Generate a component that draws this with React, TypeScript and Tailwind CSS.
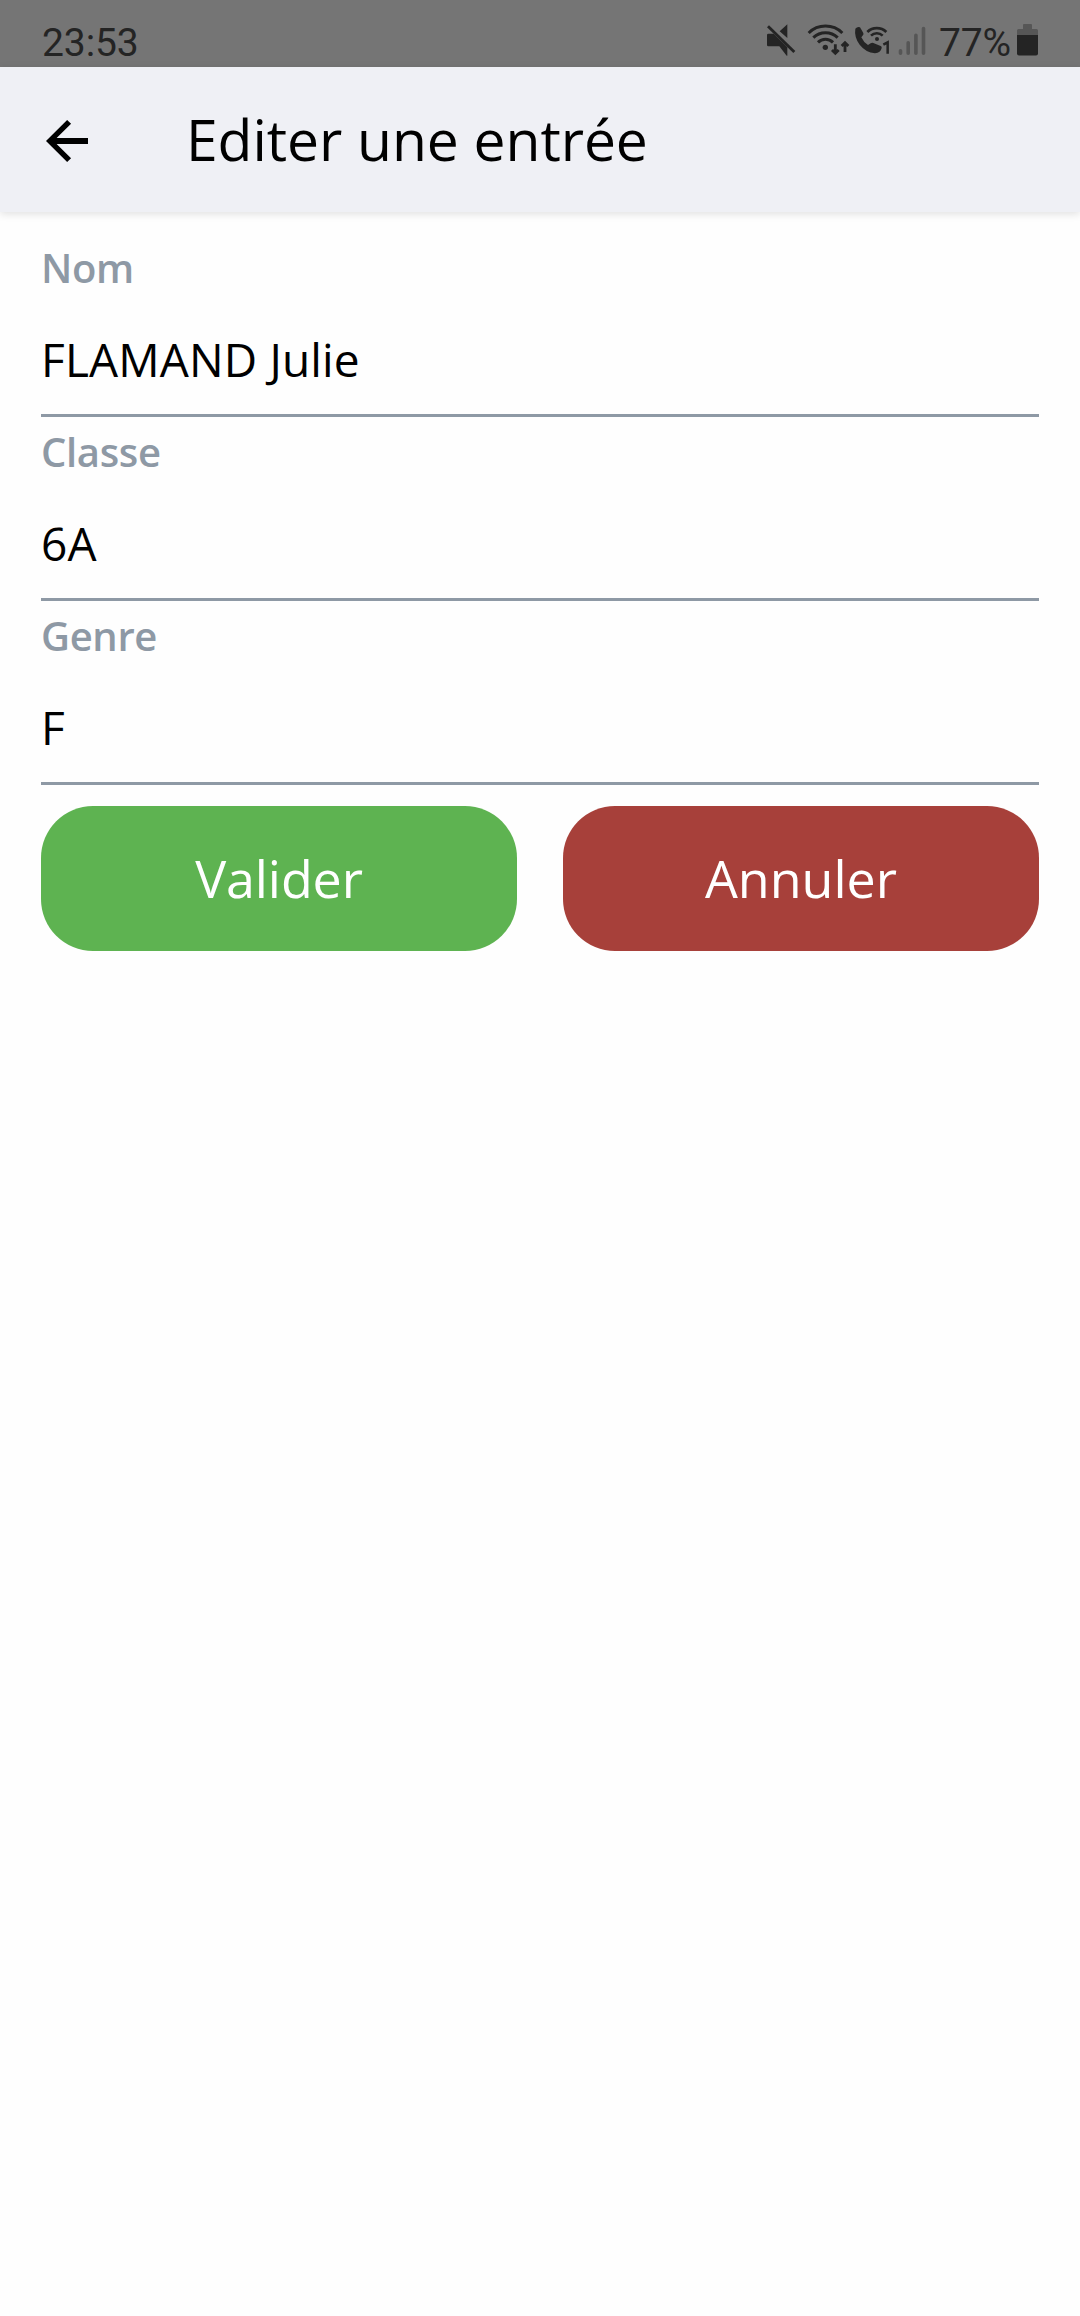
import React from "react";

function Field({ label, value }: { label: string; value: string }) {
  return (
    <label className="block h-[184px] border-b-[3px] border-[#8e99a5] pt-[8px]">
      <span className="block text-[40px] leading-[54px] font-semibold tracking-[-0.35px] text-[#8e99a5]">{label}</span>
      <span className="block pt-[31px] text-[46px] leading-[66px] tracking-[0.15px] text-black">{value}</span>
    </label>
  );
}

function StatusBar() {
  return (
    <div className="flex h-[67px] items-start bg-[#757575] px-[42px] pt-6 font-[Roboto,sans-serif] text-[39px] leading-[38px] text-[#242424]">
      <span className="tracking-[-0.1px]">23:53</span>
      <svg className="ml-auto" width="30" height="32" viewBox="48 72 90 96" fill="currentColor">
        <path d="M89 94 112 73v41zM51 105q0-4 4-4h16l41 41v25h-2L88 139H55q-4 0-4-4z" />
        <path d="M54 79 133 156" fill="none" stroke="currentColor" strokeWidth="8.5" />
      </svg>
      <svg className="ml-[11px]" width="43" height="32" viewBox="171 72 129 96" fill="none" stroke="currentColor" strokeWidth="9">
        <path d="M176 99a72 72 0 0 1 101 0M190 113a52 52 0 0 1 73 0M204 127a32 32 0 0 1 45 0" />
        <circle cx="226" cy="142" r="8" fill="currentColor" stroke="none" />
        <path d="M256 133v26M246 150l10 10 10-10M285 156v-26M275 138l10-10 10 10" strokeWidth="8.5" />
      </svg>
      <svg className="ml-[4px]" width="36" height="32" viewBox="312 72 108 96" fill="none" stroke="currentColor" strokeWidth="8">
        <path d="M316 86q7-8 14-4l10 17q2 5-3 9l-3 4q6 14 20 23l8-5q4-3 8-1l22 9q4 2 3 6-3 15-20 16-28-3-46-26-17-23-13-48" fill="currentColor" stroke="none" />
        <path d="M352 96a41 41 0 0 1 57 0M363 107a25 25 0 0 1 35 0" />
        <circle cx="381" cy="117" r="6" fill="currentColor" stroke="none" />
        <path d="M400 134l13-7v34" strokeWidth="7.5" />
      </svg>
      <svg className="ml-[8px]" width="28" height="32" viewBox="0 0 28 32" stroke="#565656" strokeWidth="3.6" strokeLinecap="round">
        <path d="M2.5 26.8v2.4M10.2 18.8v10.4M17.9 11.200v18M25.500 4.500v24.700" />
      </svg>
      <span className="ml-[13px] tracking-[-0.1px]">77%</span>
      <svg className="ml-[6px]" width="21" height="32" viewBox="0 0 21 32">
        <path d="M6 1q0-1 1-1h7q1 0 1 1v4h4.500q1.500 0 1.500 1.500V11H0V6.500Q0 5 1.500 5H6z" fill="#565656" />
        <path d="M0 11h21v18.500q0 2-2 2H2q-2 0-2-2z" fill="#242424" />
      </svg>
    </div>
  );
}

export default function App() {
  return (
    <div className="min-h-[2316px] w-[1080px] bg-[#fefefe] font-['Open_Sans',sans-serif]">
      <StatusBar />
      <header className="flex h-[145px] items-center bg-[#eff0f5] pl-[46px] shadow-[0_2px_8px_rgba(0,0,0,0.12)]">
        <svg width="42" height="42" viewBox="4 4 16 16" fill="black" className="mt-[3px]">
          <path d="M20 10.9H8.05l5.500-5.500L12.050 4 4 12l8.050 8 1.500-1.400-5.500-5.500H20z" />
        </svg>
        <h1 className="ml-[98px] pb-[2px] text-[57px] leading-[78px] tracking-[-0.05px] text-black">Editer une entrée</h1>
      </header>
      <main className="px-[41px] pt-[21px]">
        <Field label="Nom" value="FLAMAND Julie" />
        <Field label="Classe" value="6A" />
        <Field label="Genre" value="F" />
        <div className="mt-[21px] grid grid-cols-2 gap-[46px] text-[52px] leading-[70px] text-white">
          <button className="h-[145px] rounded-[52px] bg-[#5eb351] pb-[2px] tracking-[-0.1px]">Valider</button>
          <button className="h-[145px] rounded-[52px] bg-[#a7403a] pb-[2px]">Annuler</button>
        </div>
      </main>
    </div>
  );
}
